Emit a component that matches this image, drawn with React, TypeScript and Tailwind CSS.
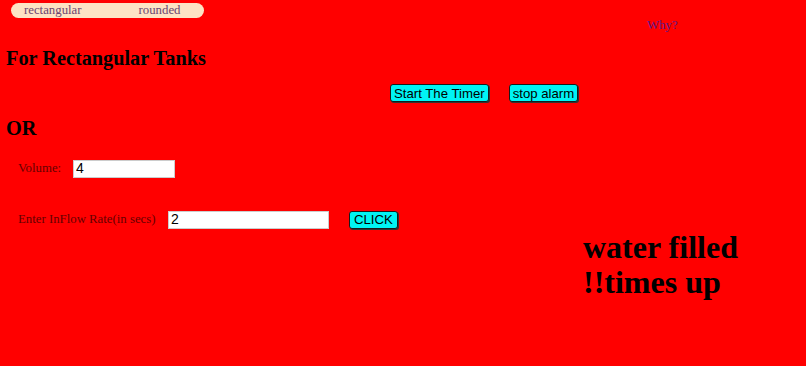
import { useState } from "react";

export default function App() {
  const [volume, setVolume] = useState("4");
  const [rate, setRate] = useState("2");

  const btn =
    "h-[18px] rounded-[3px] border border-[#1a1a1a] bg-[#00f4f4] px-[3px] text-[13.2px] leading-[15px] text-black shadow-[1px_1px_0_#333] font-['Liberation_Sans',Arial,sans-serif]";

  return (
    <div className="min-h-screen bg-[#ff0000] font-['Liberation_Serif','Times_New_Roman',serif] text-black">
      <div className="flex h-[47px] items-start">
        <div className="ml-[11px] mt-[3px] flex h-[15px] w-[193px] items-center rounded-full bg-[#fde3c4] pl-[13px] text-[12.8px] leading-[15px] text-[#6b4470]">
          <span>rectangular</span>
          <span className="ml-[57px]">rounded</span>
        </div>
        <a className="ml-[443px] mt-[18px] text-[12.8px] leading-[15px] text-[#5a1a8b]">Why?</a>
      </div>

      <h2 className="ml-[6px] text-[20.3px] font-bold leading-[23px]">For Rectangular Tanks</h2>

      <div className="ml-[390px] mt-[14px] flex gap-[20px]">
        <button type="button" className={btn}>Start The Timer</button>
        <button type="button" className={btn}>stop alarm</button>
      </div>

      <h2 className="ml-[6px] mt-[15px] text-[20.3px] font-bold leading-[23px]">OR</h2>

      <div className="mt-[19px] flex items-center">
        <label className="ml-[18px] w-[55px] text-[12.8px] text-[#650000]">Volume:</label>
        <input
          className="h-[18px] w-[102px] border border-[#ccc] bg-white px-[2px] text-[14px] font-['Liberation_Sans',Arial,sans-serif] outline-none"
          value={volume}
          onChange={(e) => setVolume(e.target.value)}
        />
      </div>

      <div className="mt-[32px] flex items-center">
        <label className="ml-[18px] w-[150px] text-[12.8px] text-[#650000]">Enter InFlow Rate(in secs)</label>
        <input
          className="h-[18px] w-[161px] border border-[#ccc] bg-white px-[2px] text-[14px] font-['Liberation_Sans',Arial,sans-serif] outline-none"
          value={rate}
          onChange={(e) => setRate(e.target.value)}
        />
        <button type="button" className={`${btn} ml-[20px] px-[4px]`}>CLICK</button>
      </div>

      <div className="ml-[583px] mt-[1px] text-[32px] font-bold leading-[35px]">
        <div>water filled</div>
        <div>!!times up</div>
      </div>
    </div>
  );
}
